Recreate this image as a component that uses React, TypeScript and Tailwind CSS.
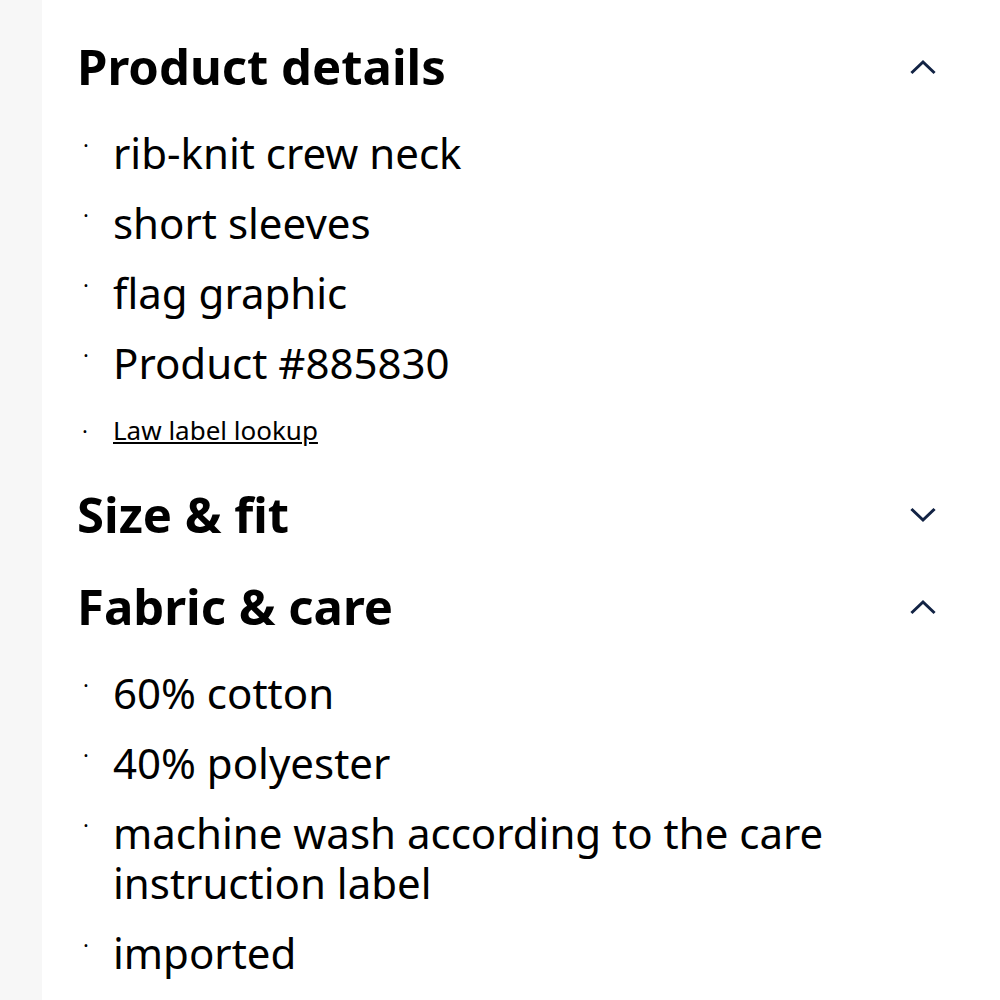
import React from 'react';

const Chevron = ({ up }: { up: boolean }) => (
  <svg width="26" height="16" viewBox="0 0 26 16" fill="none" className="text-[#122344]">
    <path
      d={up ? 'M2.5 13 L13 3 L23.5 13' : 'M2.5 3 L13 13 L23.5 3'}
      stroke="currentColor"
      strokeWidth="3"
      strokeLinecap="square"
    />
  </svg>
);

const Item = ({ children }: { children: React.ReactNode }) => (
  <li className="flex text-[42px] leading-[50px] text-black">
    <span className="w-[36px] shrink-0 pl-[6px] text-[22px] leading-[32px]">·</span>
    <span>{children}</span>
  </li>
);

const Section = ({ title, open }: { title: string; open: boolean }) => (
  <div className="flex h-[74px] items-center justify-between">
    <h2 className="text-[49px] font-bold text-black">{title}</h2>
    <Chevron up={open} />
  </div>
);

export default function App() {
  return (
    <div className="flex h-[1000px] w-[1000px] bg-white font-['Noto_Sans',sans-serif]">
      <div className="w-[42px] shrink-0 bg-[#f7f7f7]" />
      <div className="flex-1 pl-[35px] pr-[64px] pt-[30px]">
        <Section title="Product details" open />
        <ul className="mt-[24px] flex flex-col gap-[20px]">
          <Item>rib-knit crew neck</Item>
          <Item>short sleeves</Item>
          <Item>flag graphic</Item>
          <Item>Product #885830</Item>
          <li className="mt-[5px] flex items-center text-[26px] leading-[34px] text-black">
            <span className="w-[36px] shrink-0 pl-[5px] text-[22px]">·</span>
            <a href="#" className="underline underline-offset-2">Law label lookup</a>
          </li>
        </ul>
        <div className="mt-[31px]">
          <Section title="Size & fit" open={false} />
        </div>
        <div className="mt-[18px]">
          <Section title="Fabric & care" open />
        </div>
        <ul className="mt-[24px] flex flex-col gap-[20px]">
          <Item>60% cotton</Item>
          <Item>40% polyester</Item>
          <Item>machine wash according to the care instruction label</Item>
          <Item>imported</Item>
        </ul>
      </div>
    </div>
  );
}
